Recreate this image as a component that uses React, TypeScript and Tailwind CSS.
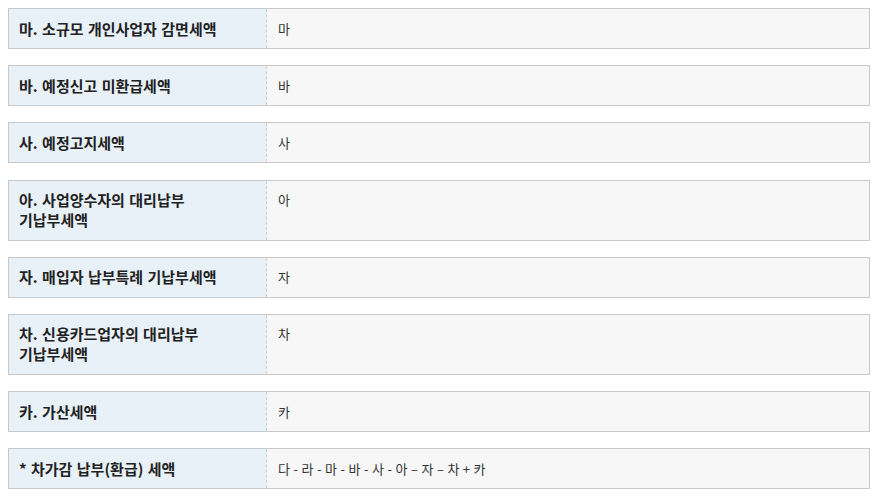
const rows: { label: string; value: string }[] = [
  { label: "마. 소규모 개인사업자 감면세액", value: "마" },
  { label: "바. 예정신고 미환급세액", value: "바" },
  { label: "사. 예정고지세액", value: "사" },
  { label: "아. 사업양수자의 대리납부 기납부세액", value: "아" },
  { label: "자. 매입자 납부특례 기납부세액", value: "자" },
  { label: "차. 신용카드업자의 대리납부 기납부세액", value: "차" },
  { label: "카. 가산세액", value: "카" },
  { label: "* 차가감 납부(환급) 세액", value: "다 - 라 - 마 - 바 - 사 - 아 – 자 – 차 + 카" },
];

export default function App() {
  return (
    <div
      className="flex flex-col gap-[16.2px] p-2 bg-white"
      style={{ fontFamily: '"Noto Sans CJK KR", "Noto Sans", sans-serif' }}
    >
      {rows.map((row) => (
        <div key={row.label} className="flex border border-[#c8c8c8]">
          <div className="w-[258px] shrink-0 bg-[#e8f0f8] border-r border-dashed border-r-[#cfcfcf] pl-[10px] pr-[16px] py-[9.5px] text-[15px] leading-[20px] font-bold text-[#222] break-keep [word-spacing:1px]">
            {row.label}
          </div>
          <div className="flex-1 bg-[#f7f7f7] pl-[11px] py-[9.5px] text-[13px] leading-[20px] text-[#333] [word-spacing:0.6px]">
            {row.value}
          </div>
        </div>
      ))}
    </div>
  );
}
